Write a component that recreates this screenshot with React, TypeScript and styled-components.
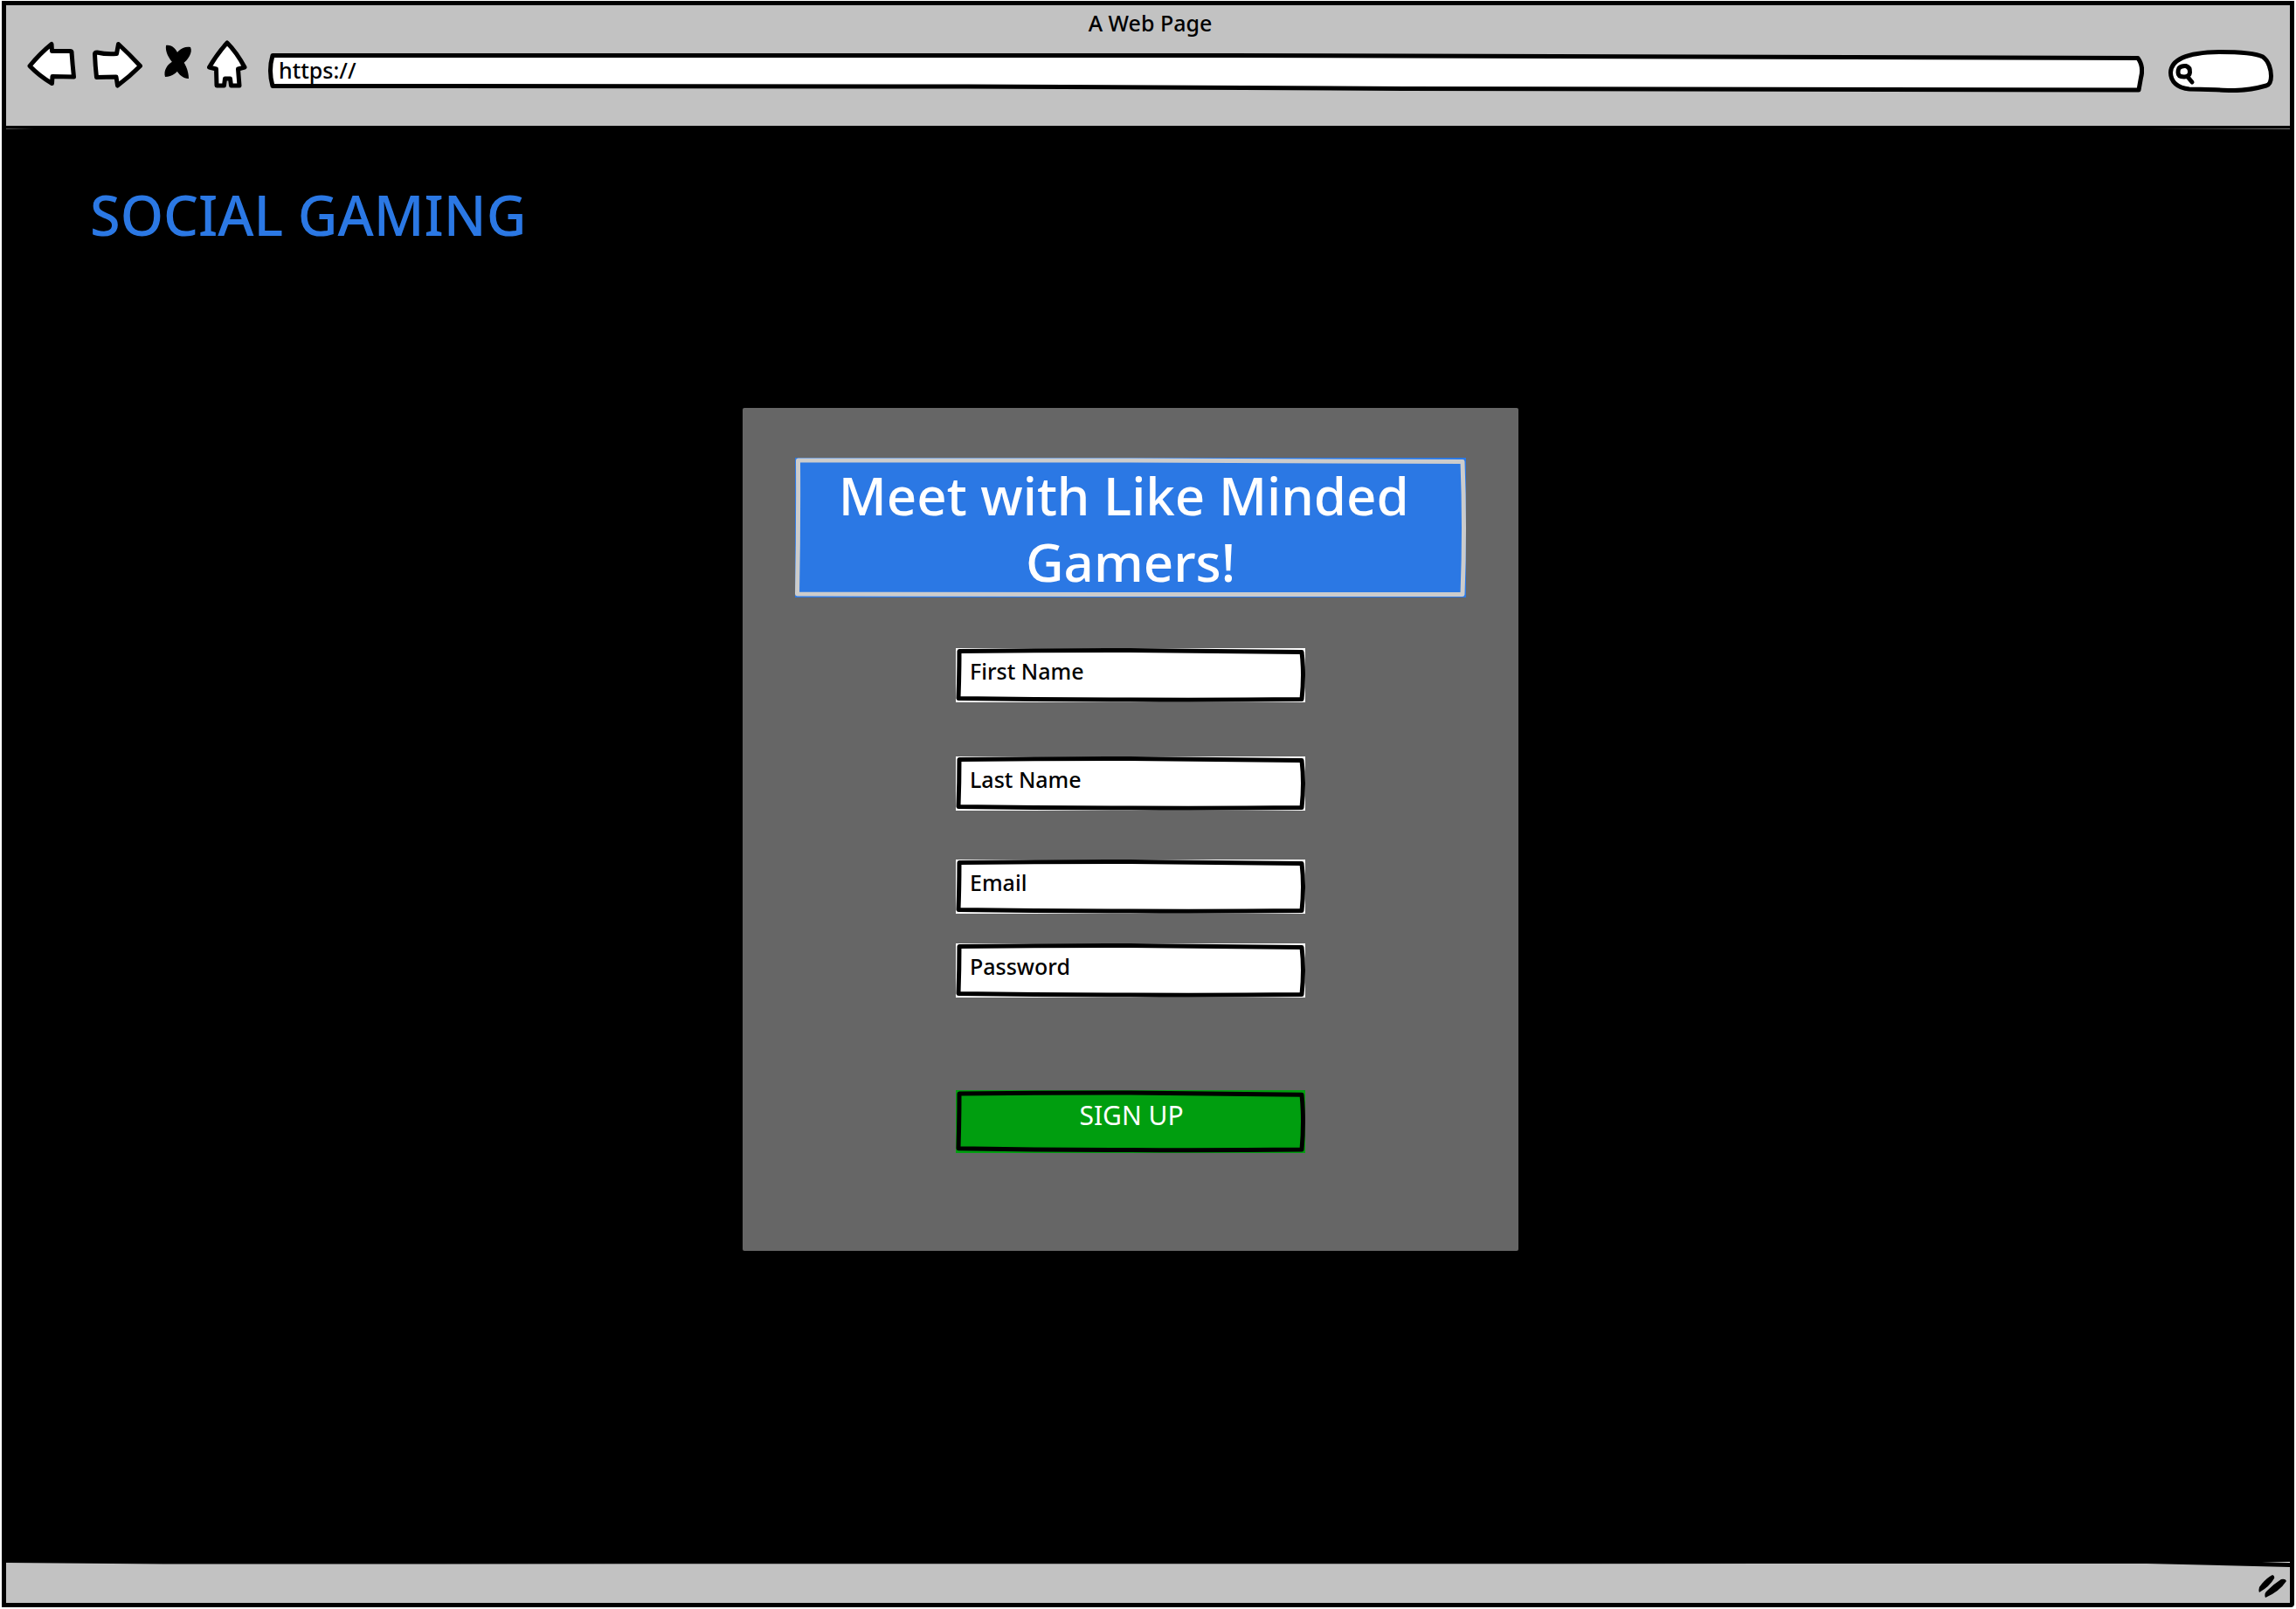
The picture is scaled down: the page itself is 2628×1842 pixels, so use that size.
import React from "react";
import styled, { createGlobalStyle } from "styled-components";

const ink = "#000000";
const chrome = "#c2c2c2";
const blue = "#2b78e4";

const GlobalStyle = createGlobalStyle`
  * { box-sizing: border-box; }
  body { margin: 0; background: #ffffff; }
  body, button, input { font-family: "Noto Sans", "Open Sans", sans-serif; color: ${ink}; }
`;

const BrowserWindow = styled.div`
  display: flex;
  flex-direction: column;
  min-height: calc(100vh - 3px);
  margin: 1px 2px 2px;
  border: 5px solid ${ink};
  border-radius: 0 0 4px 0;
  background: ${ink};
`;

const Toolbar = styled.header`
  padding: 3px 19px 38px 24px;
  background: ${chrome};
`;

const PageTitle = styled.div`
  font-size: 25px;
  font-weight: 500;
  line-height: 34px;
  text-align: center;
`;

const NavRow = styled.nav`
  display: flex;
  align-items: flex-end;
  height: 60px;
  margin-top: 3px;
`;

const NavButton = styled.button<{ $gap: number }>`
  display: block;
  flex: none;
  margin: 0 ${(p) => p.$gap}px 0 0;
  padding: 0;
  border: 0;
  background: none;
  cursor: pointer;
`;

const Icon = styled.svg`
  display: block;
  stroke: ${ink};
  stroke-width: 5;
  stroke-linejoin: round;
  stroke-linecap: round;
  fill: #ffffff;
`;

const Outline = styled.svg<{ $stroke: string; $fill: string; $width: number }>`
  position: absolute;
  inset: 0;
  width: 100%;
  height: 100%;
  pointer-events: none;
  stroke: ${(p) => p.$stroke};
  stroke-width: ${(p) => p.$width};
  stroke-linejoin: round;
  fill: ${(p) => p.$fill};

  path { vector-effect: non-scaling-stroke; }
`;

const AddressBar = styled.div`
  position: relative;
  flex: 1;
  height: 45px;
`;

const AddressInput = styled.input`
  position: relative;
  display: block;
  width: 100%;
  height: 45px;
  padding: 2px 12px 9px;
  border: 0;
  outline: 0;
  background: transparent;
  font-size: 25px;
  font-weight: 500;
  line-height: 34px;
`;

const SearchBox = styled.div`
  position: relative;
  flex: none;
  width: 120px;
  height: 50px;
  margin-left: 28px;
`;

const SearchShape = styled(Icon)`
  position: absolute;
  inset: 0;
`;

const SearchInput = styled.input`
  position: relative;
  display: block;
  width: 100%;
  height: 50px;
  padding: 0 12px 0 34px;
  border: 0;
  outline: 0;
  background: transparent;
  font-size: 25px;
`;

const Main = styled.main`
  flex: 1;
  padding: 62px 96px;
  background:
    linear-gradient(90deg, #555555, #000000) 0 3px / 32px 1px no-repeat,
    linear-gradient(90deg, #000000, #777777) 100% 3px / 160px 1px no-repeat,
    linear-gradient(90deg, #000000, #ffffff) 100% 100% / 32px 1px no-repeat,
    ${ink};
`;

const Brand = styled.h1`
  margin: 0;
  color: ${blue};
  font-size: 63px;
  font-weight: 500;
  line-height: 80px;
`;

const CardArea = styled.div`
  display: flex;
  justify-content: center;
  margin-top: 181px;
  padding-right: 40px;
`;

const Card = styled.form`
  display: flex;
  flex-direction: column;
  align-items: center;
  width: 888px;
  max-width: 100%;
  padding: 57px 60px 112px;
  border-radius: 2px;
  background: #666666;
`;

const Banner = styled.div`
  position: relative;
  width: 100%;
  margin-bottom: 58px;
  padding: 5px 32px 3px;
  background: ${blue};
`;

const BannerText = styled.h2`
  position: relative;
  margin: 0;
  color: #ffffff;
  font-size: 60px;
  font-weight: 500;
  line-height: 76px;
  text-align: center;
`;

const Field = styled.div<{ $gap: number }>`
  position: relative;
  width: 400px;
  max-width: 100%;
  margin-bottom: ${(p) => p.$gap}px;
  background: #ffffff;
`;

const FieldInput = styled.input`
  display: block;
  width: 100%;
  height: 62px;
  padding: 9px 16px 19px;
  border: 0;
  outline: 0;
  background: transparent;
  font-size: 25px;
  font-weight: 500;
  line-height: 34px;

  &::placeholder { color: ${ink}; opacity: 1; }
`;

const SignUpButton = styled.button`
  position: relative;
  width: 400px;
  max-width: 100%;
  padding: 9px 14px 23px 16px;
  border: 0;
  background: #009e0f;
  color: #ffffff;
  font-size: 30px;
  line-height: 40px;
  cursor: pointer;
`;

const StatusBar = styled.footer`
  position: relative;
  display: flex;
  justify-content: flex-end;
  padding: 14px 4px 4px;
`;

const Grip = styled.svg`
  position: relative;
  display: block;
  fill: ${ink};
`;

const BoxOutline = () => (
  <Outline $stroke={ink} $fill="none" $width={5} viewBox="0 0 400 62" preserveAspectRatio="none" aria-hidden="true">
    <path d="M4 3.5 Q100 2.5 200 2.5 Q300 3.5 396 4.5 Q399 30 396 58.5 Q300 59.5 200 59 Q100 59 3 57.5 Q4 30 4 3.5 Z" />
  </Outline>
);

const fields = [
  { id: "first-name", label: "First Name", type: "text", gap: 62 },
  { id: "last-name", label: "Last Name", type: "text", gap: 56 },
  { id: "email", label: "Email", type: "email", gap: 34 },
  { id: "password", label: "Password", type: "password", gap: 106 },
];

export default function App() {
  return (
    <>
      <GlobalStyle />
      <BrowserWindow>
        <Toolbar>
          <PageTitle>A Web Page</PageTitle>
          <NavRow>
            <NavButton $gap={18} type="button" aria-label="Back">
              <Icon width="56" height="60" viewBox="0 0 56 60">
                <path d="M3 29.5 Q15 15 28 4.5 L28.5 12.5 L49 12.5 Q51 12.5 51 14 Q52 28 53.5 42 L29 41.5 L28.5 49.5 Q14 41 3 29.5 Z" />
              </Icon>
            </NavButton>
            <NavButton $gap={24} type="button" aria-label="Forward">
              <Icon width="58" height="60" viewBox="0 0 58 60">
                <path d="M3.5 16 Q3.5 14 6 14 Q17 16.5 28.5 15.5 L30.5 4.5 Q43 16 55.5 29.5 Q43 42 29.5 52 L28 42 L5.5 42.5 Q4 29 3.5 16 Z" />
              </Icon>
            </NavButton>
            <NavButton $gap={16} type="button" aria-label="Stop">
              <Icon width="34" height="60" viewBox="0 0 34 60">
                <g fill={ink} stroke="none">
                  <path d="M3 6 C9 5 15 9 18 19 C25 25 29 35 29 44 C22 44 15 38 12 27 C6 21 2 13 3 6 Z" />
                  <path d="M31 8 C34 14 28 23 22 27 C18 36 10 42 2 42 C0 35 4 28 11 24 C13 14 22 6 31 8 Z" />
                </g>
              </Icon>
            </NavButton>
            <NavButton $gap={24} type="button" aria-label="Home">
              <Icon width="46" height="60" viewBox="0 0 46 60">
                <path d="M23 3 Q34 14 43 31 L35.5 33 L37 52 L27.5 52 L26.5 44 L20.5 44 L19.5 52 L11 52 L10.5 33 L2.5 31 Q12 15 23 3 Z" />
              </Icon>
            </NavButton>
            <AddressBar>
              <Outline $stroke={ink} $fill="#ffffff" $width={5} viewBox="0 0 2147 45" preserveAspectRatio="none" aria-hidden="true">
                <path d="M5 2.5 L1100 2.5 L2140 5.5 Q2147 15 2143.5 28 L2141 42 L1300 40.5 L800 38 L5 37.5 Q0 20 5 2.5 Z" />
              </Outline>
              <AddressInput aria-label="Address" defaultValue="https://" />
            </AddressBar>
            <SearchBox>
              <SearchShape width="120" height="50" viewBox="0 0 120 50" aria-hidden="true">
                <path d="M2.5 27 C3 14 18 4 58 3.5 C85 3.5 100 5 108 9 C115 14 117.5 24 117.5 31 C117.5 38 116 41 112 42 C98 46 88 48 72 47.5 C55 47 40 46 24 46 C10 45 2.5 37 2.5 27 Z" />
                <path d="M12 22 Q15 19 20 19.5 Q25 21 24.5 27 Q24 32 18 32 Q11 32 11 27 Q11 24 12 22 Z" />
                <path d="M22 32 L27 38" />
              </SearchShape>
              <SearchInput aria-label="Search" />
            </SearchBox>
          </NavRow>
        </Toolbar>
        <Main>
          <Brand>SOCIAL GAMING</Brand>
          <CardArea>
            <Card onSubmit={(e) => e.preventDefault()}>
              <Banner>
                <Outline $stroke="#cccccc" $fill="none" $width={5} viewBox="0 0 768 160" preserveAspectRatio="none" aria-hidden="true">
                  <path d="M3.5 3 Q200 2.5 384 3 Q600 4 764 4.5 Q767 80 764 156.5 L384 156.5 L2.5 156 Q4 80 3.5 3 Z" />
                </Outline>
                <BannerText>
                  Meet with Like Minded&nbsp;
                  <br />
                  Gamers!
                </BannerText>
              </Banner>
              {fields.map((f) => (
                <Field key={f.id} $gap={f.gap}>
                  <FieldInput id={f.id} type={f.type} placeholder={f.label} aria-label={f.label} />
                  <BoxOutline />
                </Field>
              ))}
              <SignUpButton type="submit">
                <BoxOutline />
                SIGN UP
              </SignUpButton>
            </Card>
          </CardArea>
        </Main>
        <StatusBar>
          <Outline $stroke="none" $fill={chrome} $width={0} viewBox="0 0 2614 46" preserveAspectRatio="none" aria-hidden="true">
            <path d="M0 0 L180 1.5 L2450 1 L2614 5 L2614 46 L0 46 Z" />
          </Outline>
          <Grip width="32" height="28" viewBox="0 0 32 28" aria-hidden="true">
            <path d="M1 20 Q-1 15 4 10 Q10 3 16 0 Q19 1 18 4 Q13 13 1 20 Z" />
            <path d="M8 26 Q6 21 10 18 Q18 10 26 5 Q31 4 32 7 Q24 19 8 26 Z" />
          </Grip>
        </StatusBar>
      </BrowserWindow>
    </>
  );
}
